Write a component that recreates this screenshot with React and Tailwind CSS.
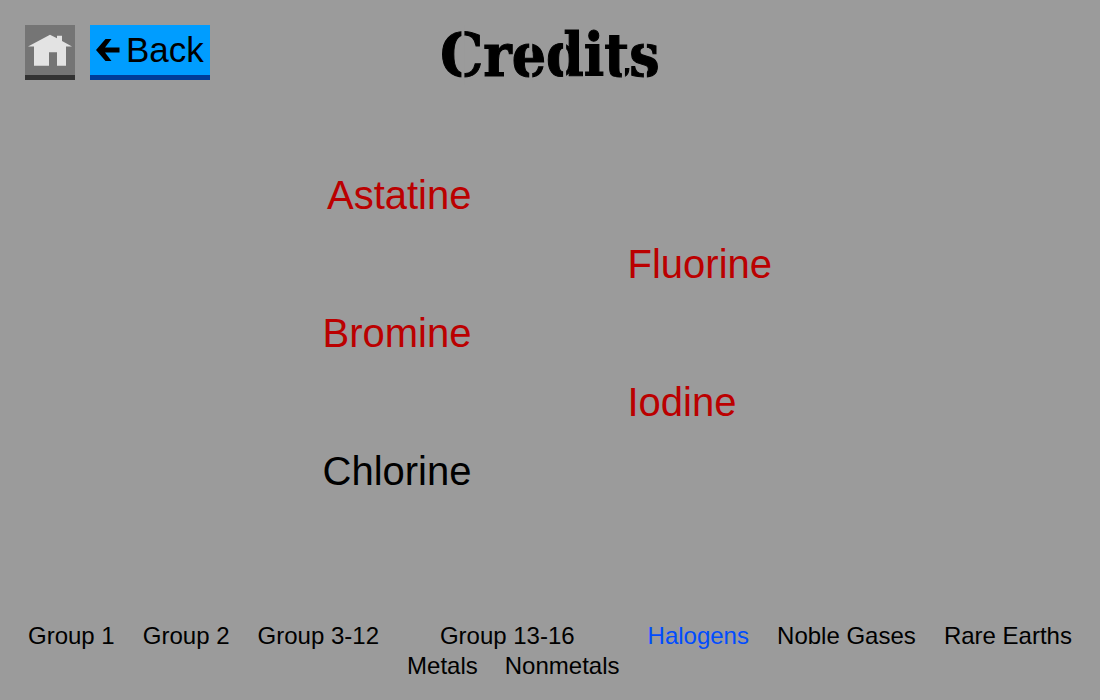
const elements = [
  { name: "Astatine", color: "text-[#bb0000]" },
  { name: "Fluorine", color: "text-[#bb0000]" },
  { name: "Bromine", color: "text-[#bb0000]" },
  { name: "Iodine", color: "text-[#bb0000]" },
  { name: "Chlorine", color: "text-black" },
];

function HomeIcon() {
  return (
    <svg viewBox="0 0 50 50" className="h-[50px] w-[50px]" aria-hidden="true">
      <path
        fill="#e3e3e3"
        d="M3 21.5 25 9.700l7 3.500V10.700h5v5.300l10 5.500h-6V40.700h-9V27.300h-8V40.700H9V21.500Z"
      />
    </svg>
  );
}

function BackArrow() {
  return (
    <svg viewBox="0 0 24 22" className="h-[22px] w-6" aria-hidden="true">
      <path fill="#000" d="M0 11 9.500 0h6L9 8.500h14.500v5H9l6.500 8.500h-6Z" />
    </svg>
  );
}

function NavLink({ children, active }) {
  return (
    <a
      href="#"
      aria-current={active ? "true" : undefined}
      className={active ? "text-[#004cff]" : "text-black"}
    >
      {children}
    </a>
  );
}

/* Stencil lettering: a heavy serif with bridges cut through the bowls. */
function Title() {
  return (
    <h1 className="relative font-['DejaVu_Serif_Condensed','DejaVu_Serif',serif] text-[60px] leading-[60px] font-bold [-webkit-text-stroke:1px_black]">
      Credits
      <svg
        className="absolute inset-0 h-full w-full"
        viewBox="0 0 220 60"
        aria-hidden="true"
      >
        <path
          d="M23 0v60M91 16v13M91 40v16M125 16v14M125 40v16M184 40v16M206 16v9M206 46v10"
          stroke="#9b9b9b"
          strokeWidth="3"
          fill="none"
        />
      </svg>
    </h1>
  );
}

export default function App() {
  return (
    <div className="flex min-h-screen flex-col bg-[#9b9b9b] font-['Liberation_Sans',Arial,sans-serif] text-black">
      <header className="grid grid-cols-[1fr_auto_1fr] items-start px-[25px] pt-[25px]">
        <div className="flex gap-[15px]">
          <button
            aria-label="Home"
            className="border-b-[5px] border-[#333333] bg-[#757575]"
          >
            <HomeIcon />
          </button>
          <button className="flex h-[55px] items-center gap-[6px] border-b-[5px] border-[#003d99] bg-[#009dff] px-[6px] text-[35px] leading-[50px]">
            <BackArrow />
            Back
          </button>
        </div>
        <Title />
      </header>

      <main className="flex-1 pt-[90px]">
        <ul className="flex flex-col gap-[29px] pr-px text-[40px] leading-10">
          {elements.map((element, index) => (
            <li key={element.name} className="grid grid-cols-2 gap-x-[156px]">
              <span
                className={
                  index % 2 === 0
                    ? `col-start-1 text-right ${element.color}`
                    : `col-start-2 ${element.color}`
                }
              >
                {element.name}
              </span>
            </li>
          ))}
        </ul>
      </main>

      <nav className="flex justify-between px-7 pb-[19px] text-2xl leading-[30px] whitespace-nowrap">
        <NavLink>Group 1</NavLink>
        <NavLink>Group 2</NavLink>
        <NavLink>Group 3-12</NavLink>
        <div className="flex flex-col items-center">
          <div className="pr-3">
            <NavLink>Group 13-16</NavLink>
          </div>
          <div className="flex gap-[27px]">
            <NavLink>Metals</NavLink>
            <NavLink>Nonmetals</NavLink>
          </div>
        </div>
        <NavLink active>Halogens</NavLink>
        <NavLink>Noble Gases</NavLink>
        <NavLink>Rare Earths</NavLink>
      </nav>
    </div>
  );
}
